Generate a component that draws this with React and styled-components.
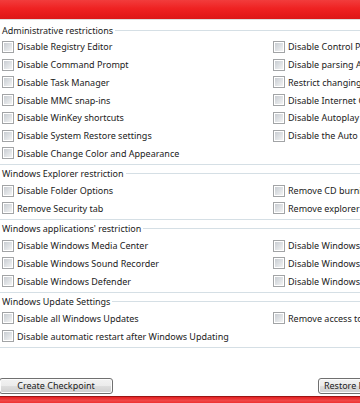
import React from "react";
import styled, { createGlobalStyle } from "styled-components";

const GlobalStyle = createGlobalStyle`
  html, body {
    margin: 0;
    padding: 0;
    background: #ffffff;
    overflow: hidden;
  }
  body {
    font-family: "Noto Sans", "Open Sans", sans-serif;
    font-size: 9px;
    color: #1b1b1b;
  }
`;

const Window = styled.div`
  width: 560px;
  height: 403px;
  display: flex;
  flex-direction: column;
`;

const TitleBar = styled.div`
  height: 19px;
  width: 360px;
  background: linear-gradient(to bottom, #f23c3c 0%, #ef2222 45%, #e61b1b 75%, #dc1818 100%);
  border-bottom: 1px solid #dedede;
`;

const Groups = styled.div`
  display: flex;
  flex-direction: column;
  gap: 2px;
  margin-top: 3px;
`;

const Group = styled.section`
  border-bottom: 1px solid #d5dfe5;
  padding-bottom: 1.5px;
`;

const GroupHeader = styled.div`
  display: flex;
  align-items: center;
  height: 14px;
  padding-left: 2px;
  margin-bottom: 1px;
  white-space: nowrap;

  &::after {
    content: "";
    flex: 1;
    border-top: 1px solid #d5dfe5;
    margin-left: 2px;
  }
`;

const Grid = styled.div`
  display: grid;
  grid-template-columns: 271px 1fr;
  grid-auto-rows: 17.75px;
`;

const Option = styled.label`
  display: flex;
  align-items: center;
  gap: 3px;
  padding-left: 2px;
  white-space: nowrap;
  cursor: default;
`;

const Box = styled.span`
  position: relative;
  width: 10px;
  height: 10px;
  border: 1px solid #a2a4a6;
  background: #ffffff;
  flex: none;

  &::after {
    content: "";
    position: absolute;
    inset: 1px;
    background: linear-gradient(135deg, #c9cdd2 0%, #dfe2e5 55%, #f3f3f3 100%);
  }
`;

const ButtonRow = styled.div`
  display: flex;
  gap: 205px;
  margin-top: 30px;
  margin-left: -1px;
`;

const Button = styled.button`
  width: 114px;
  height: 16px;
  padding: 0;
  font: inherit;
  color: #1b1b1b;
  border: 1px solid #707070;
  border-radius: 3px;
  background: linear-gradient(to bottom, #f2f2f2 0%, #ebebeb 50%, #dddddd 51%, #cfcfcf 100%);
  box-shadow: inset 0 0 0 1px #fcfcfc;
  white-space: nowrap;
  flex: none;
`;

const BottomBar = styled.div`
  margin-top: auto;
  width: 360px;
  height: 6px;
  border-top: 1px solid #9c1414;
  background: linear-gradient(to bottom, #e42020 0%, #f04848 60%, #ee3030 100%);
`;

const groups = [
  {
    title: "Administrative restrictions",
    rows: [
      ["Disable Registry Editor", "Disable Control Panel"],
      ["Disable Command Prompt", "Disable parsing AutoRun.inf"],
      ["Disable Task Manager", "Restrict changing wallpaper"],
      ["Disable MMC snap-ins", "Disable Internet Options"],
      ["Disable WinKey shortcuts", "Disable Autoplay"],
      ["Disable System Restore settings", "Disable the Auto Play"],
      ["Disable Change Color and Appearance", null]
    ]
  },
  {
    title: "Windows Explorer restriction",
    rows: [
      ["Disable Folder Options", "Remove CD burning features"],
      ["Remove Security tab", "Remove explorer's context menu"]
    ]
  },
  {
    title: "Windows applications' restriction",
    rows: [
      ["Disable Windows Media Center", "Disable Windows Messenger"],
      ["Disable Windows Sound Recorder", "Disable Windows Mobility Center"],
      ["Disable Windows Defender", "Disable Windows Sidebar"]
    ]
  },
  {
    title: "Windows Update Settings",
    rows: [
      ["Disable all Windows Updates", "Remove access to all Windows Update features"],
      ["Disable automatic restart after Windows Updating", null]
    ]
  }
];

const Check = ({ label }) =>
  label ? (
    <Option>
      <Box />
      {label}
    </Option>
  ) : (
    <span />
  );

const App = () => (
  <Window>
    <GlobalStyle />
    <TitleBar />
    <Groups>
      {groups.map(group => (
        <Group key={group.title}>
          <GroupHeader>{group.title}</GroupHeader>
          <Grid>
            {group.rows.map(([left, right]) => (
              <React.Fragment key={left}>
                <Check label={left} />
                <Check label={right} />
              </React.Fragment>
            ))}
          </Grid>
        </Group>
      ))}
    </Groups>
    <ButtonRow>
      <Button>Create Checkpoint</Button>
      <Button>Restore Default Settings</Button>
    </ButtonRow>
    <BottomBar />
  </Window>
);

export default App;
